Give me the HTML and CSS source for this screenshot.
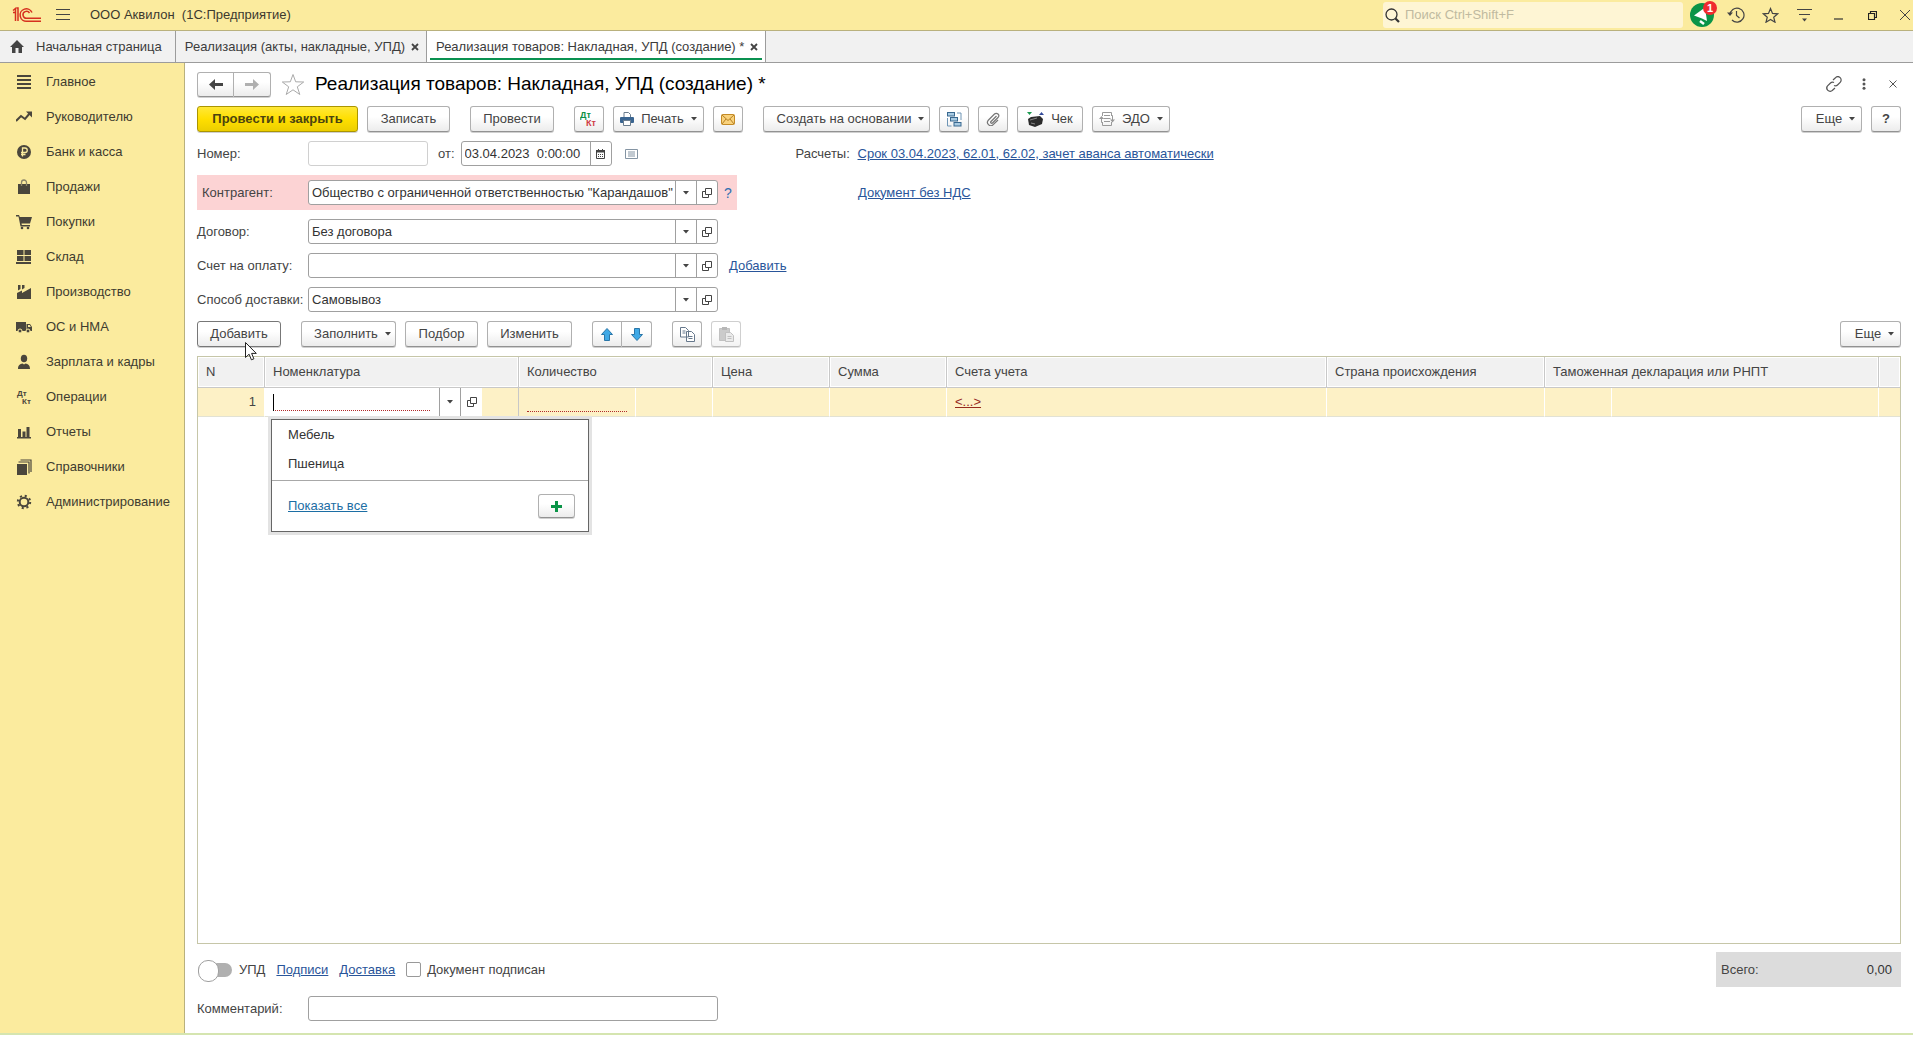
FILE: index.html
```html
<!DOCTYPE html>
<html lang="ru">
<head>
<meta charset="utf-8">
<title>ООО Аквилон (1С:Предприятие)</title>
<link rel="stylesheet" href="styles.css">
</head>
<body>
<svg class="sprite" aria-hidden="true">
  <symbol id="open" viewBox="0 0 10 10"><path d="M3.5.5h6v6h-6zM3 3.500H.5v6h6V7" fill="none" stroke="#444"/></symbol>
  <symbol id="caret" viewBox="0 0 6 4"><path d="M0 0h6L3 3.500z" fill="#444"/></symbol>
  <symbol id="cross" viewBox="0 0 8 8"><path d="M1 1l6 6M7 1L1 7" stroke="#444" stroke-width="1.800" fill="none"/></symbol>
</svg>
<div class="app">
  <header class="titlebar">
    <svg class="logo" viewBox="0 0 30 16"><g fill="none" stroke="#d6301f" stroke-width="1.500"><path d="M1 3.500L3.500 1.500V14M6 14V1H4.500M1 5.500h2"/><path d="M20 5.500A6.200 6.200 0 1 0 15 14.200h14"/><path d="M17.500 6A3.500 3.500 0 1 0 15 11.300h14"/></g></svg>
    <button class="icon-btn" aria-label="Меню"><svg width="14" height="12" viewBox="0 0 14 12"><path d="M0 .5h14M0 5.500h14M0 10.500h14" stroke="#444"/></svg></button>
    <span class="app-name">ООО Аквилон&nbsp; (1С:Предприятие)</span>
    <div class="search">
      <svg width="15" height="15" viewBox="0 0 15 15"><circle cx="6.500" cy="6.500" r="5.500" fill="none" stroke="#333" stroke-width="1.300"/><path d="M10.500 10.500l3.500 3.500" stroke="#333" stroke-width="2.200"/></svg>
      <input class="search-input" type="text" aria-label="Поиск" placeholder="Поиск Ctrl+Shift+F">
    </div>
    <div class="window-tools">
      <button class="icon-btn notice" aria-label="Оповещения"><svg width="24" height="24" viewBox="0 0 24 24"><circle cx="12" cy="12" r="12" fill="#0a9447"/><path d="M4 12.500L15 4.500l2 13.500-5-2.500z" fill="#fff"/><path d="M10 18l4 3" stroke="#fff" stroke-width="2.500"/></svg><span class="badge">1</span></button>
      <button class="icon-btn" aria-label="История"><svg width="18" height="16" viewBox="0 0 18 16"><path d="M3 8a7 7 0 1 1 2 5M9.500 4v4.500l3 2.500" fill="none" stroke="#444" stroke-width="1.200"/><path d="M0 5.500h6L3 9z" fill="#444"/></svg></button>
      <button class="icon-btn" aria-label="Избранное"><svg width="17" height="16" viewBox="0 0 17 16"><path d="M8.500 1.500l2 4.900 5.200.4-4 3.400 1.300 5-4.500-2.800L4 15.200l1.300-5-4-3.400 5.200-.4z" fill="none" stroke="#444" stroke-width="1.200"/></svg></button>
      <button class="icon-btn" aria-label="Настройки"><svg width="15" height="14" viewBox="0 0 15 14"><path d="M0 1.500h15M2 6.500h11" stroke="#444" stroke-width="1.200"/><path d="M5 10.500h5l-2.500 3z" fill="#444"/></svg></button>
      <button class="icon-btn" aria-label="Свернуть"><svg width="9" height="10" viewBox="0 0 9 10"><path d="M0 9h9" stroke="#333" stroke-width="1.200"/></svg></button>
      <button class="icon-btn" aria-label="Восстановить"><svg width="9" height="9" viewBox="0 0 9 9"><path d="M.5 2.500h6v6h-6zM2.500 2.500v-2h6v6h-2" fill="none" stroke="#222" stroke-width="1.200"/></svg></button>
      <button class="icon-btn" aria-label="Закрыть"><svg width="10" height="10" viewBox="0 0 10 10"><path d="M0 0l10 10M10 0L0 10" stroke="#444"/></svg></button>
    </div>
  </header>

  <nav class="tabs">
    <a class="tab home" href="#"><svg width="14" height="13" viewBox="0 0 14 13"><path d="M7 0l7 7h-2v6H8.500V8h-3v5H2V7H0z" fill="#444"/></svg>Начальная страница</a>
    <div class="tab"><a href="#">Реализация (акты, накладные, УПД)</a><button class="icon-btn" aria-label="Закрыть вкладку"><svg width="8" height="8"><use href="#cross"/></svg></button></div>
    <div class="tab current"><a href="#">Реализация товаров: Накладная, УПД (создание) *</a><button class="icon-btn" aria-label="Закрыть вкладку"><svg width="8" height="8"><use href="#cross"/></svg></button></div>
  </nav>

  <div class="workspace">
    <nav class="sidebar">
      <a href="#"><svg viewBox="0 0 16 16"><path d="M1 2h14M1 6h14M1 10h14M1 14h14" stroke="#4a463c" stroke-width="2"/></svg>Главное</a>
      <a href="#"><svg viewBox="0 0 16 16"><path d="M0 12l5-5 4 3 5-6" fill="none" stroke="#4a463c" stroke-width="2"/><path d="M10 2.500h6v6z" fill="#4a463c"/></svg>Руководителю</a>
      <a href="#"><svg viewBox="0 0 16 16"><circle cx="8" cy="8" r="7" fill="#4a463c"/><path d="M6.500 12.500V4h2.500a2 2 0 0 1 0 4.500H5M5 10.500h4.500" fill="none" stroke="#faeb9e" stroke-width="1.300"/></svg>Банк и касса</a>
      <a href="#"><svg viewBox="0 0 16 16"><path d="M2 5h12v10H2z" fill="#4a463c"/><path d="M5.500 7V3.500a2.500 2.500 0 0 1 5 0V7" fill="none" stroke="#8a8468" stroke-width="1.300"/></svg>Продажи</a>
      <a href="#"><svg viewBox="0 0 16 16"><path d="M0 1h3l.8 2H16l-2 6.500H5.500l.3 1.500H14v1.500H4.500L2.500 2.500H0z" fill="#4a463c"/><circle cx="6" cy="14" r="1.300" fill="#4a463c"/><circle cx="12" cy="14" r="1.300" fill="#4a463c"/></svg>Покупки</a>
      <a href="#"><svg viewBox="0 0 16 16"><path d="M1 1h6.500v5H1zM8.500 1H15v5H8.500zM1 7h6.500v5H1zM8.500 7H15v5H8.500zM0 13h15v2H0z" fill="#4a463c"/></svg>Склад</a>
      <a href="#"><svg viewBox="0 0 16 16"><path d="M1 15V9l5-2.500V9l9-5v11zM2 1h2.500v4L2 6.500zM6 1h2.500v3L6 5.500z" fill="#4a463c"/></svg>Производство</a>
      <a href="#"><svg viewBox="0 0 16 16"><path d="M0 3h10v9H0zM10.500 5H14l2 3v4h-5.500z" fill="#4a463c"/><path d="M12 6h1.800l1 2H12z" fill="#faeb9e"/><circle cx="4" cy="12" r="2" fill="#4a463c" stroke="#faeb9e"/><circle cx="12" cy="12" r="2" fill="#4a463c" stroke="#faeb9e"/></svg>ОС и НМА</a>
      <a href="#"><svg viewBox="0 0 16 16"><ellipse cx="8" cy="4.500" rx="3.200" ry="3.800" fill="#4a463c"/><path d="M2 15c0-4 2-5 4.500-5.500L8 10.500l1.500-1C12 10 14 11 14 15z" fill="#4a463c"/></svg>Зарплата и кадры</a>
      <a href="#"><svg viewBox="0 0 16 16"><text x="1" y="7" class="dk-dark">Дт</text><text x="6" y="15" class="dk-dark">Кт</text></svg>Операции</a>
      <a href="#"><svg viewBox="0 0 16 16"><path d="M1 13h14v1.500H1zM2 5h3v8H2zM6.500 7.500h3V13h-3zM10.500 3h3v10h-3z" fill="#4a463c"/></svg>Отчеты</a>
      <a href="#"><svg viewBox="0 0 16 16"><path d="M1 5h10v11H1z" fill="#4a463c"/><path d="M2.500 3h10.500v11.500M4.500 1h10.500v12" fill="none" stroke="#4a463c" stroke-width="1.200"/></svg>Справочники</a>
      <a href="#"><svg viewBox="0 0 16 16"><circle cx="8" cy="8" r="4.300" fill="none" stroke="#4a463c" stroke-width="2"/><circle cx="8" cy="8" r="6.200" fill="none" stroke="#4a463c" stroke-width="2" stroke-dasharray="2.100 2.770"/></svg>Администрирование</a>
    </nav>

    <main class="form">
      <div class="form-head">
        <div class="split nav-split">
          <button class="btn" aria-label="Назад"><svg width="14" height="11" viewBox="0 0 14 11"><path d="M6 0L0 5.500 6 11V7h8V4H6z" fill="#444"/></svg></button>
          <button class="btn" aria-label="Вперед"><svg width="14" height="11" viewBox="0 0 14 11"><path d="M8 0l6 5.500L8 11V7H0V4h8z" fill="#b0b0b0"/></svg></button>
        </div>
        <button class="icon-btn" aria-label="В избранное"><svg width="24" height="23" viewBox="0 0 24 23"><path d="M12 1.500l2.700 7.300 8 .2-6.400 4.800 2.500 7.700-6.800-4.700-6.800 4.700 2.500-7.700L1.300 9l8-.2z" fill="#fff" stroke="#aaa"/></svg></button>
        <h1>Реализация товаров: Накладная, УПД (создание) *</h1>
        <div class="form-tools">
          <button class="icon-btn" aria-label="Ссылка"><svg width="16" height="16" viewBox="0 0 16 16"><g fill="none" stroke="#555" stroke-width="1.200"><path d="M7 4l2.500-2.300a3.200 3.200 0 0 1 4.700 4.600L11.500 9a3 3 0 0 1-3.500.5"/><path d="M9 12l-2.500 2.300a3.200 3.200 0 0 1-4.700-4.600L4.500 7A3 3 0 0 1 8 6.500" /></g></svg></button>
          <button class="icon-btn" aria-label="Еще действия"><svg width="4" height="12" viewBox="0 0 4 12"><circle cx="2" cy="1.700" r="1.500" fill="#555"/><circle cx="2" cy="6" r="1.500" fill="#555"/><circle cx="2" cy="10.300" r="1.500" fill="#555"/></svg></button>
          <button class="icon-btn" aria-label="Закрыть форму"><svg width="8" height="8" viewBox="0 0 8 8"><path d="M.5.5l7 7M7.500.5l-7 7" stroke="#555"/></svg></button>
        </div>
      </div>

      <div class="toolbar">
        <button class="btn primary">Провести и закрыть</button>
        <button class="btn w-83">Записать</button>
        <button class="btn w-84 apart">Провести</button>
        <button class="btn w-30 apart" aria-label="Проводки"><svg width="18" height="16" viewBox="0 0 18 16"><text x="0" y="7" class="dk-green">Дт</text><text x="6" y="15" class="dk-red">Кт</text></svg></button>
        <button class="btn w-91"><svg width="14" height="14" viewBox="0 0 14 14"><path d="M4 5V.5h4.500L10.500 2.500V5" fill="#fff" stroke="#6b7d8e"/><rect y="5" width="14" height="6" rx="1" fill="#3a6591"/><path d="M3.500 8.500h7v5h-7z" fill="#fff" stroke="#6b7d8e"/></svg>Печать<svg class="caret"><use href="#caret"/></svg></button>
        <button class="btn w-30" aria-label="Отправить"><svg width="14" height="11" viewBox="0 0 14 11"><rect x=".5" y=".5" width="13" height="10" rx="1" fill="#f9d27c" stroke="#c48b26"/><path d="M1 1l6 5.500L13 1M1 10l4-5M13 10L9 5" fill="none" stroke="#b57f22"/></svg></button>
        <button class="btn w-167 apart">Создать на основании<svg class="caret"><use href="#caret"/></svg></button>
        <button class="btn w-30" aria-label="Структура подчиненности"><svg width="15" height="15" viewBox="0 0 15 15"><g fill="#a9cbe3" stroke="#39688f"><rect x=".5" y=".5" width="7" height="3.500"/><rect x="3.500" y="5.500" width="7" height="3.500"/><rect x="7" y="10.500" width="7" height="3.500"/></g><path d="M10 1h4v7M.5 6v8h4" fill="none" stroke="#6e95b5"/></svg></button>
        <button class="btn w-30" aria-label="Файлы"><svg width="14" height="14" viewBox="0 0 14 14"><path d="M10.500 4L5 9.500a1 1 0 0 0 1.500 1.500l5.500-5.500a2.400 2.400 0 0 0-3.500-3.500L2.500 8a3.300 3.300 0 0 0 4.700 4.700L12 8" fill="none" stroke="#777" stroke-width="1.200"/></svg></button>
        <button class="btn w-66"><svg width="17" height="15" viewBox="0 0 17 15"><path d="M1 7l3-2 9-1 3 3-1 5-7 3-6-2z" fill="#2c2c2c"/><path d="M3 8l7-2M4 11l4 1" stroke="#888"/><path d="M0 0h5L2.500 3z" fill="#1b9a50"/><path d="M12 3l2.500-3L17 3z" fill="#334a9a"/></svg>Чек</button>
        <button class="btn w-78"><svg width="16" height="14" viewBox="0 0 16 14"><path d="M3.500 4V.5h9V4M3.500 10v3.500h9V10M5 3.500h6M4.500 6.500h7M5 9.500h6M12.500 3.500h1v6M3.500 10.500h-1V5" fill="none" stroke="#999"/><path d="M0 7l2.500-3L5 7zM11 7.500h5l-2.500 3z" fill="#999"/></svg>ЭДО<svg class="caret"><use href="#caret"/></svg></button>
        <button class="btn w-61 push">Еще<svg class="caret"><use href="#caret"/></svg></button>
        <button class="btn w-30 help">?</button>
      </div>

      <div class="fields">
        <div class="row">
          <label class="name" for="num">Номер:</label>
          <input id="num" class="box number" type="text">
          <label class="from" for="date">от:</label>
          <div class="combo date">
            <input id="date" type="text" value="03.04.2023  0:00:00">
            <button aria-label="Календарь"><svg width="9" height="10" viewBox="0 0 9 10"><path d="M.5 1.500h8v8h-8z" fill="#fff" stroke="#444"/><path d="M0 1h9v2.500H0zM2 0h1v2H2zM6 0h1v2H6z" fill="#444"/><path d="M2 5.500h5.500M2 7.500h5.500" stroke="#444" stroke-dasharray="1 1"/></svg></button>
          </div>
          <button class="icon-btn list-btn" aria-label="Список"><svg width="13" height="10" viewBox="0 0 13 10"><path d="M.5.5h12v9H.5zM3 3h7M3 5h7M3 7h7" fill="none" stroke="#8494a3"/></svg></button>
          <div class="aside"><span class="aside-name">Расчеты:</span><a href="#">Срок 03.04.2023, 62.01, 62.02, зачет аванса автоматически</a></div>
        </div>
        <div class="row">
          <div class="required">
            <label class="name" for="partner">Контрагент:</label>
            <div class="combo"><input id="partner" type="text" value="Общество с ограниченной ответственностью &quot;Карандашов&quot;"><button aria-label="Выбрать"><svg class="caret"><use href="#caret"/></svg></button><button aria-label="Открыть"><svg width="10" height="10"><use href="#open"/></svg></button></div>
            <a class="hint" href="#">?</a>
          </div>
          <div class="aside"><span class="aside-name"></span><a href="#">Документ без НДС</a></div>
        </div>
        <div class="row">
          <label class="name" for="contract">Договор:</label>
          <div class="combo"><input id="contract" type="text" value="Без договора"><button aria-label="Выбрать"><svg class="caret"><use href="#caret"/></svg></button><button aria-label="Открыть"><svg width="10" height="10"><use href="#open"/></svg></button></div>
        </div>
        <div class="row">
          <label class="name" for="invoice">Счет на оплату:</label>
          <div class="combo"><input id="invoice" type="text"><button aria-label="Выбрать"><svg class="caret"><use href="#caret"/></svg></button><button aria-label="Открыть"><svg width="10" height="10"><use href="#open"/></svg></button></div>
          <a class="add-link" href="#">Добавить</a>
        </div>
        <div class="row">
          <label class="name" for="delivery">Способ доставки:</label>
          <div class="combo"><input id="delivery" type="text" value="Самовывоз"><button aria-label="Выбрать"><svg class="caret"><use href="#caret"/></svg></button><button aria-label="Открыть"><svg width="10" height="10"><use href="#open"/></svg></button></div>
        </div>
      </div>

      <div class="toolbar">
        <button class="btn w-84 hovered">Добавить<svg class="pointer" viewBox="0 0 12 19"><path d="M.5.5v15l3.600-3.300 2.300 5.600 2.500-1-2.300-5.400h4.700z" fill="#fff" stroke="#222"/></svg></button>
        <button class="btn w-95 apart">Заполнить<svg class="caret"><use href="#caret"/></svg></button>
        <button class="btn w-73">Подбор</button>
        <button class="btn w-85">Изменить</button>
        <div class="split apart">
          <button class="btn" aria-label="Вверх"><svg width="12" height="13" viewBox="0 0 12 13"><path d="M6 .5l5.500 6h-3v6h-5v-6h-3z" fill="#3fa9e6" stroke="#2a76a8"/></svg></button>
          <button class="btn" aria-label="Вниз"><svg width="12" height="13" viewBox="0 0 12 13"><path d="M6 12.500l-5.500-6h3v-6h5v6h3z" fill="#3fa9e6" stroke="#2a76a8"/></svg></button>
        </div>
        <button class="btn w-30 apart" aria-label="Копировать"><svg width="15" height="15" viewBox="0 0 15 15"><g fill="#fff" stroke="#66788c"><path d="M.5.5h5l3 3v6.500h-8zM6.500 4.500h5l3 3v7h-8z"/><path d="M2.500 4h3M2.500 6h3M8.500 9.500h4M8.500 11.500h4"/></g></svg></button>
        <button class="btn w-30" aria-label="Вставить" disabled><svg width="15" height="15" viewBox="0 0 15 15"><path d="M.5 1.500h10v12H.5z" fill="#aaa" stroke="#999"/><path d="M3 0h5v3H3z" fill="#888"/><path d="M6.500 5.500h5l3 3v6h-8z" fill="#ddd" stroke="#999"/><path d="M8.500 9.500h4M8.500 11.500h4" stroke="#999"/></svg></button>
        <button class="btn w-61 push">Еще<svg class="caret"><use href="#caret"/></svg></button>
      </div>

      <div class="grid">
        <table>
          <colgroup><col class="c-n"><col class="c-item"><col class="c-sum"><col class="c-unit"><col class="c-sum"><col class="c-sum"><col><col class="c-country"><col class="c-n"><col class="c-decl"><col class="c-end"></colgroup>
          <thead><tr><th>N</th><th>Номенклатура</th><th colspan="2">Количество</th><th>Цена</th><th>Сумма</th><th>Счета учета</th><th>Страна происхождения</th><th colspan="2">Таможенная декларация или РНПТ</th><th></th></tr></thead>
          <tbody><tr>
            <td class="num">1</td>
            <td class="edit">
              <div class="editor">
                <div class="editor-main"><input type="text" class="dotted" aria-label="Номенклатура"><span class="text-caret"></span></div>
                <button aria-label="Выбрать"><svg class="caret"><use href="#caret"/></svg></button>
                <button aria-label="Открыть"><svg width="10" height="10"><use href="#open"/></svg></button>
              </div>
              <div class="popup">
                <a class="option" href="#">Мебель</a>
                <a class="option" href="#">Пшеница</a>
                <div class="popup-foot"><a href="#">Показать все</a><button class="btn" aria-label="Создать"><svg width="11" height="11" viewBox="0 0 11 11"><path d="M5.500 0v11M0 5.500h11" stroke="#0a9447" stroke-width="3"/></svg></button></div>
              </div>
            </td>
            <td><input type="text" class="dotted qty" aria-label="Количество"></td><td></td><td></td><td></td>
            <td><a class="accounts" href="#">&lt;...&gt;</a></td><td></td><td></td><td></td><td></td>
          </tr></tbody>
        </table>
      </div>

      <div class="summary">
        <label class="toggle"><input type="checkbox"><span class="track"></span>УПД</label>
        <a href="#">Подписи</a>
        <a href="#">Доставка</a>
        <label class="check"><input type="checkbox">Документ подписан</label>
        <div class="total"><span>Всего:</span><output>0,00</output></div>
      </div>
      <div class="row">
        <label class="name" for="comment">Комментарий:</label>
        <input id="comment" class="box comment" type="text">
      </div>
    </main>
  </div>
</div>
</body>
</html>
```
FILE: styles.css
```css
* { box-sizing: border-box; }
body {
  margin: 0;
  background: #fff;
  color: #444;
  font: 13px/16px "Liberation Sans", Arial, sans-serif;
}
button, input { font: inherit; color: inherit; margin: 0; padding: 0; }
a { color: #29559a; }
svg { display: block; flex: none; }
.sprite { position: absolute; width: 0; height: 0; }
.dk-dark, .dk-green, .dk-red { font: bold 8px "Liberation Sans", Arial, sans-serif; fill: #4a463c; }
.dk-green { font-size: 9px; fill: #0a8f45; }
.dk-red { font-size: 9px; fill: #cf3a45; }

.app {
  display: flex;
  flex-direction: column;
  height: calc(100vh - 28px);
  min-height: 720px;
  margin-right: 6px;
  border-bottom: 2px solid #d5e5b0;
}

.icon-btn { display: flex; align-items: center; justify-content: center; border: 0; background: none; }

/* Title bar */
.titlebar {
  display: flex;
  align-items: center;
  height: 31px;
  padding-left: 12px;
  background: #fbeb9e;
  border-bottom: 1px solid #b9b17d;
}
.logo { width: 30px; height: 16px; margin-right: 14px; }
.app-name { margin-left: 20px; color: #3c392e; }
.search {
  display: flex;
  align-items: center;
  gap: 5px;
  width: 300px;
  height: 26px;
  margin-left: auto;
  padding-left: 2px;
  border-radius: 3px;
  background: #fef5d4;
}
.search-input { flex: 1; min-width: 0; border: 0; background: none; outline: 0; }
.search-input::placeholder { color: #c0baa0; opacity: 1; }
.window-tools { display: flex; gap: 16px; margin-left: 10px; }
.window-tools .icon-btn { width: 18px; }
.window-tools .icon-btn:last-child, .form-tools .icon-btn:last-child { width: 16px; }
.notice { position: relative; }
.badge {
  position: absolute;
  top: -2px;
  left: 10px;
  width: 14px;
  height: 14px;
  border-radius: 7px;
  background: #ef2b2f;
  color: #fff;
  font: bold 11px/14px "Liberation Sans", Arial, sans-serif;
}

/* Tabs */
.tabs { display: flex; height: 32px; background: #f1f1f1; border-bottom: 1px solid #9c9c9c; }
.tab {
  display: flex;
  align-items: center;
  gap: 6px;
  padding: 0 7px 0 9px;
  border-right: 1px solid #9c9c9c;
  color: #3c3c3c;
  text-decoration: none;
}
.tab a { color: inherit; text-decoration: none; }
.home { gap: 12px; padding: 0 13px 0 10px; }
.current {
  background: linear-gradient(#0a9150, #0a9150) 3px 27px / calc(100% - 6px) 2px no-repeat #fff;
}

/* Sections */
.workspace { display: flex; flex: 1; min-height: 0; }
.sidebar { width: 185px; padding-top: 1px; background: #fbeb9e; border-right: 1px solid #b9b17d; }
.sidebar a {
  display: flex;
  align-items: center;
  gap: 14px;
  height: 35px;
  padding-left: 16px;
  color: #403c30;
  text-decoration: none;
}
.sidebar svg { width: 16px; height: 16px; }

/* Form */
.form { display: flex; flex: 1; flex-direction: column; min-width: 0; padding: 8px 12px 12px; gap: 9px; }
.form-head { display: flex; align-items: center; gap: 10px; height: 26px; }
h1 { margin: 0; color: #000; font-size: 19px; line-height: 24px; font-weight: 400; }
.form-tools { display: flex; gap: 12px; margin-left: auto; }
.form-tools .icon-btn { width: 18px; }

.btn {
  position: relative;
  display: flex;
  align-items: center;
  justify-content: center;
  gap: 7px;
  height: 26px;
  border: 1px solid #b0b0b0;
  border-bottom-color: #929292;
  border-radius: 3px;
  background: linear-gradient(#fff 40%, #ececec);
  box-shadow: 0 1px 0 #d0d0d0;
  color: #444;
  white-space: nowrap;
}
.btn:disabled { opacity: .6; }
.caret { width: 6px; height: 4px; }
.primary {
  width: 161px;
  border-color: #ab9500;
  background: linear-gradient(#ffe838, #ffdf00 50%, #ecce00);
  color: #4b4410;
  font-weight: 700;
}
.hovered { border-color: #777; }
.help { font-weight: 700; }
.toolbar { display: flex; gap: 9px; }
.toolbar .apart { margin-left: 11px; }
.toolbar .push { margin-left: auto; }
.w-30 { width: 30px; }
.w-61 { width: 61px; padding-left: 8px; }
.w-66 { width: 66px; }
.w-73 { width: 73px; }
.w-78 { width: 78px; }
.w-83 { width: 83px; }
.w-84 { width: 84px; }
.w-85 { width: 85px; }
.w-91 { width: 91px; }
.w-95 { width: 95px; padding-left: 8px; }
.w-167 { width: 167px; padding-left: 8px; }
.split { display: flex; }
.split .btn { width: 30px; }
.split .btn:first-child { border-radius: 3px 0 0 3px; }
.split .btn:last-child { border-left: 0; border-radius: 0 3px 3px 0; }
.nav-split .btn { width: 37px; height: 25px; }
.pointer { position: absolute; left: 47px; top: 20px; width: 12px; height: 19px; z-index: 2; }

/* Fields */
.fields { display: flex; flex-direction: column; gap: 9px; }
.row { position: relative; display: flex; align-items: center; }
.name { width: 111px; white-space: nowrap; }
.box, .combo { height: 25px; border: 1px solid #a0a0a0; border-radius: 3px; background: #fff; }
.number { width: 120px; border-color: #d0d0d0; }
.comment { width: 410px; }
.from { margin: 0 6px 0 10px; }
.combo { display: flex; width: 410px; color: #333; }
.combo input { flex: 1; min-width: 0; padding-left: 3px; border: 0; background: none; outline: 0; white-space: pre; }
.combo button {
  display: flex;
  align-items: center;
  justify-content: center;
  width: 21px;
  border: 0;
  border-left: 1px solid #a0a0a0;
  background: none;
}
.date { width: 151px; }
.list-btn { margin-left: 13px; }
.required { display: flex; align-items: center; width: 540px; margin-right: 59px; padding: 5px 0; background: #fcd3d4; }
.required .name { padding-left: 5px; }
.hint { margin-left: 6px; color: #2f6fb0; font-size: 14px; text-decoration: none; }
.aside { display: flex; }
.list-btn + .aside { margin-left: 158px; }
.aside-name { width: 62px; }
.add-link { margin-left: 11px; }

/* Items table */
.grid { flex: 1; min-height: 200px; border: 1px solid #c6c6a8; }
table { width: 100%; border-collapse: separate; border-spacing: 0; table-layout: fixed; }
.c-n { width: 67px; }
.c-item { width: 254px; }
.c-sum { width: 117px; }
.c-unit { width: 77px; }
.c-country { width: 218px; }
.c-decl { width: 267px; }
.c-end { width: 21px; }
th {
  height: 31px;
  padding: 0 8px;
  border-right: 1px solid #c8c8c8;
  border-bottom: 1px solid #c8c8c8;
  background: #f1f1f1;
  box-shadow: inset 0 0 0 1px #fff;
  font-weight: 400;
  text-align: left;
}
td {
  height: 29px;
  padding: 0 8px;
  border-right: 1px solid #fff;
  border-bottom: 1px solid #e2e2d4;
  background: #fdf1c6;
}
th:last-child, td:last-child { border-right: 0; }
.num { text-align: right; }
td.edit { position: relative; padding: 0; border-right-color: #c8c8c8; }
.editor { display: flex; width: 217px; height: 28px; background: #fff; }
.editor button {
  display: flex;
  align-items: center;
  justify-content: center;
  width: 21px;
  border: 0;
  border-left: 1px solid #a0a0a0;
  background: none;
}
.editor button:last-child { width: 22px; }
.editor-main { position: relative; flex: 1; padding: 4px 9px 0 8px; }
.dotted { display: block; width: 100%; height: 19px; border: 0; border-bottom: 1px dotted #b02a2a; background: none; outline: 0; }
.qty { width: 100px; }
.text-caret { position: absolute; left: 8px; top: 6px; width: 1px; height: 17px; background: #000; }
.accounts { color: #962a1e; }
.popup {
  position: absolute;
  left: 6px;
  top: 31px;
  z-index: 1;
  width: 318px;
  border: 1px solid #666;
  background: #fff;
  box-shadow: 0 0 0 3px #e3e3e3;
}
.option { display: block; height: 29px; padding-left: 16px; color: #333; line-height: 29px; text-decoration: none; }
.popup-foot {
  display: flex;
  align-items: center;
  justify-content: space-between;
  height: 51px;
  margin-top: 2px;
  padding: 0 13px 0 16px;
  border-top: 1px solid #a8a8a8;
}
.popup-foot a { color: #1c6ea4; }
.popup-foot .btn { width: 37px; height: 24px; }

/* Footer */
.summary { display: flex; align-items: center; gap: 11px; height: 35px; margin-top: -1px; }
.toggle, .check { display: flex; align-items: center; }
.toggle { position: relative; gap: 7px; padding-left: 1px; }
.toggle input { position: absolute; opacity: 0; }
.track { position: relative; width: 34px; height: 14px; border-radius: 7px; background: #b0b0b0; }
.track::before {
  content: "";
  position: absolute;
  left: 0;
  top: -3px;
  width: 19px;
  height: 20px;
  border: 1px solid #a0a0a0;
  border-radius: 10px;
  background: #fff;
}
.check { gap: 6px; }
.check input { appearance: none; width: 15px; height: 15px; border: 1px solid #999; border-radius: 2px; background: #fff; }
.total { display: flex; align-items: center; width: 185px; height: 35px; margin-left: auto; padding: 0 9px 0 5px; background: #dcdcdc; }
.total output { margin-left: auto; color: #333; }
```
